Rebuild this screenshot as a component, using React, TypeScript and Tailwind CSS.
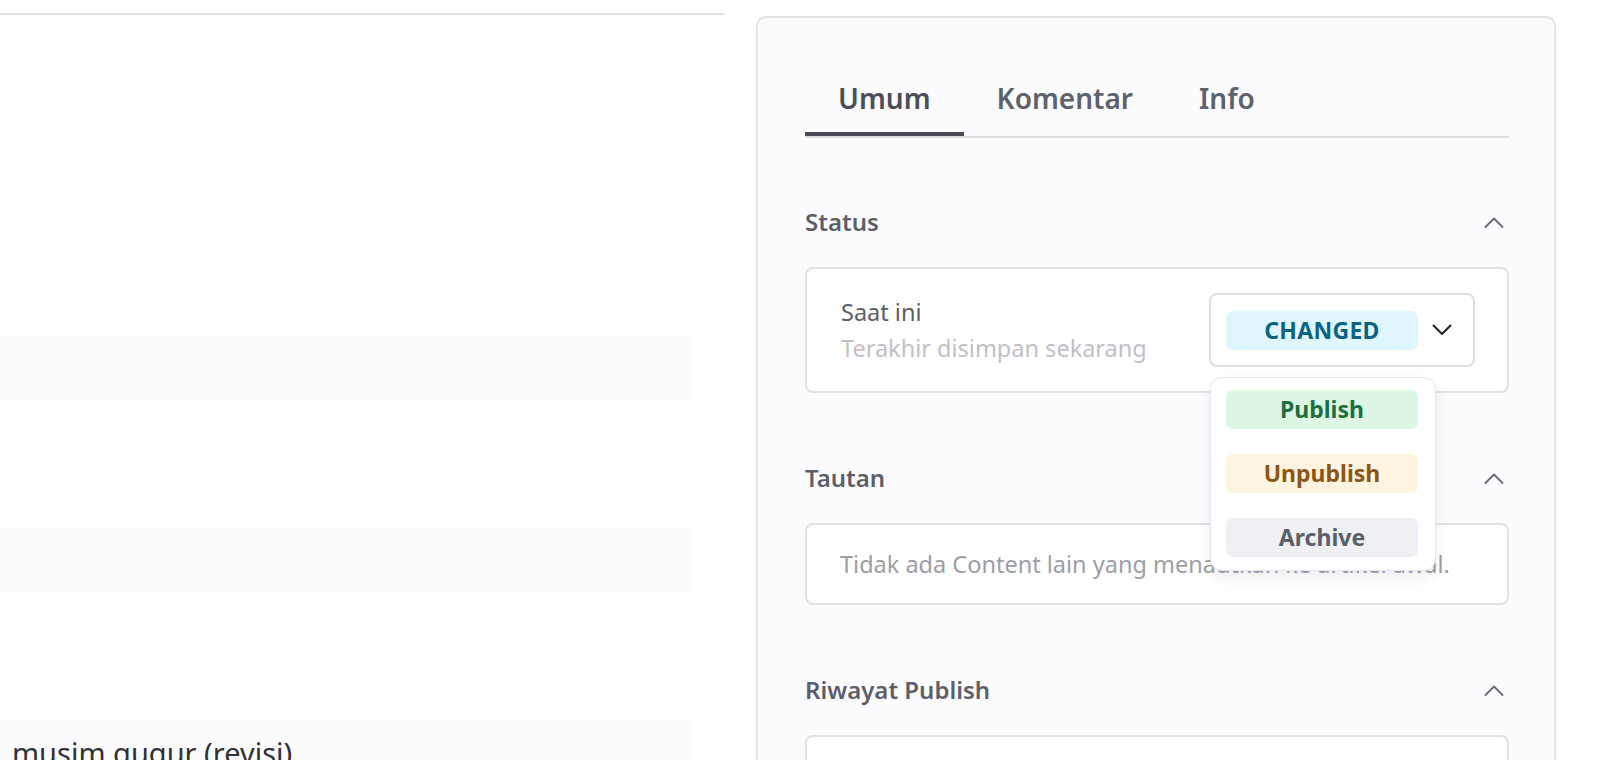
import { useState } from "react";

const font = { fontFamily: '"Noto Sans", "Open Sans", sans-serif' };

function ChevronUp() {
  return (
    <svg width="20" height="11" viewBox="0 0 20 11" fill="none" className="mr-[5px]">
      <polyline points="1.5,10 10,1.5 18.5,10" stroke="#666a72" strokeWidth="1.8" strokeLinecap="round" strokeLinejoin="round" />
    </svg>
  );
}

function ChevronDown() {
  return (
    <svg width="20" height="12" viewBox="0 0 20 12" fill="none">
      <polyline points="1.5,1.5 10,10 18.5,1.5" stroke="#222" strokeWidth="2" strokeLinecap="round" strokeLinejoin="round" />
    </svg>
  );
}

function SectionHeading({ title }: { title: string }) {
  return (
    <div className="flex h-[32px] items-center justify-between">
      <span className="text-[24px] font-semibold leading-[32px] text-[#5c5f69]">{title}</span>
      <ChevronUp />
    </div>
  );
}

const options = [
  { label: "Publish", cls: "bg-[#dcf8e4] text-[#1f6e3e]" },
  { label: "Unpublish", cls: "bg-[#fff4e0] text-[#8c5618]" },
  { label: "Archive", cls: "bg-[#eef0f3] text-[#5b5f69]" },
];

export default function App() {
  const [tab, setTab] = useState("Umum");
  const tabs = ["Umum", "Komentar", "Info"];

  return (
    <div className="flex h-[760px] w-[1620px] overflow-hidden bg-white" style={font}>
      {/* left editor column */}
      <div className="flex w-[724px] shrink-0 flex-col">
        <div className="h-[15px] shrink-0 border-b-2 border-[#e0e0e0]" />
        <div className="mt-[320px] h-[66px] w-[692px] shrink-0 bg-[#fbfbfd]" />
        <div className="mt-[127px] h-[63px] w-[692px] shrink-0 bg-[#fbfbfd]" />
        <div className="mt-[129px] h-[66px] w-[692px] shrink-0 bg-[#fbfbfd] pl-[12px] text-[29px] leading-[66px] text-[#2f3035]">
          musim gugur (revisi)
        </div>
      </div>

      {/* right sidebar */}
      <div className="ml-[32px] mt-[16px] h-[900px] w-[800px] shrink-0 rounded-[10px] border-2 border-[#e3e3e5] bg-[#fcfcfe] pl-[47px] pr-[45px] pt-[61px]">
        <div className="flex border-b-2 border-[#dfdfe2]">
          {tabs.map((t) => (
            <button
              key={t}
              onClick={() => setTab(t)}
              className={
                t === tab
                  ? "border-b-4 border-[#4b4e59] px-[33px] pb-[15px] text-[28px] font-semibold leading-[38px] text-[#4b4e59]"
                  : "border-b-4 border-transparent px-[33px] pb-[15px] text-[28px] font-semibold leading-[38px] text-[#5e626c]"
              }
            >
              {t}
            </button>
          ))}
        </div>

        <div className="mt-[68px]">
          <SectionHeading title="Status" />
          <div className="mt-[29px] flex items-center justify-between rounded-[8px] border-2 border-[#e1e1e4] bg-white py-[24px] pl-[34px] pr-[32px]">
            <div className="flex flex-col">
              <span className="text-[23.5px] leading-[36px] text-[#5b5e66]">Saat ini</span>
              <span className="text-[23.5px] leading-[36px] text-[#bfc1c6]">Terakhir disimpan sekarang</span>
            </div>
            <div className="relative flex h-[74px] w-[266px] items-center rounded-[8px] border-2 border-[#dedee1] bg-white pl-[15px]">
              <span className="flex h-[39px] w-[192px] items-center justify-center rounded-[7px] bg-[#e0f6fd] text-[23px] font-bold tracking-[0.3px] text-[#0b6285]">
                CHANGED
              </span>
              <span className="ml-[14px] flex">
                <ChevronDown />
              </span>
              <div className="absolute left-[-1px] top-[82px] z-10 flex w-[226px] flex-col gap-[25px] rounded-[12px] border border-[#e5e5f3] bg-white pb-[13px] pl-[15px] pt-[12px] shadow-[0_6px_14px_rgba(30,30,60,0.08)]">
                {options.map((o) => (
                  <span
                    key={o.label}
                    className={`flex h-[39px] w-[192px] items-center justify-center rounded-[7px] text-[23px] font-bold ${o.cls}`}
                  >
                    {o.label}
                  </span>
                ))}
              </div>
            </div>
          </div>
        </div>

        <div className="mt-[69px]">
          <SectionHeading title="Tautan" />
          <div className="mt-[29px] rounded-[8px] border-2 border-[#e1e1e4] bg-white py-[22px] pl-[33px] text-[23.5px] leading-[34px] text-[#9c9ea5]">
            Tidak ada Content lain yang menautkan ke artikel awal.
          </div>
        </div>

        <div className="mt-[69px]">
          <SectionHeading title="Riwayat Publish" />
          <div className="mt-[29px] h-[140px] rounded-[8px] border-2 border-[#e1e1e4] bg-white" />
        </div>
      </div>
    </div>
  );
}
